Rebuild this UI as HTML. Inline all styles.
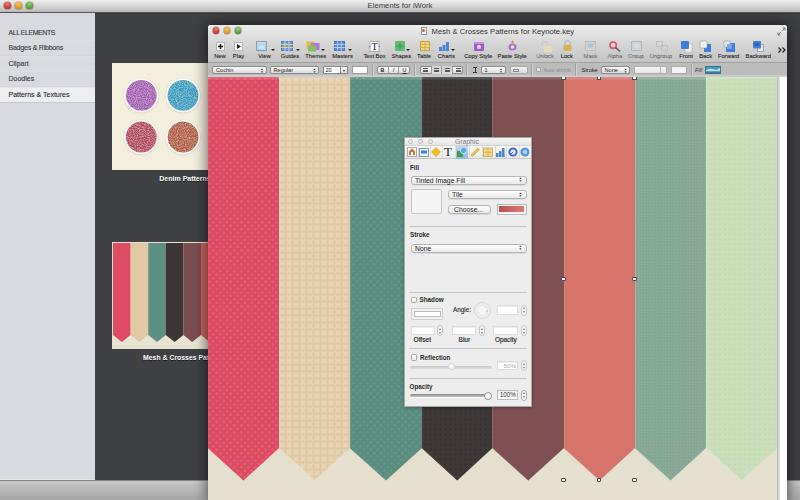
<!DOCTYPE html><html><head><meta charset="utf-8"><style>
*{margin:0;padding:0;box-sizing:border-box}
html,body{width:800px;height:500px;overflow:hidden;background:#404145;font-family:"Liberation Sans",sans-serif}
.a{position:absolute}
.tl{position:absolute;width:6.6px;height:6.6px;border-radius:50%}
.row{position:absolute;left:0;width:95px;height:16px;border-bottom:1px solid #d4d5da;border-top:1px solid #dedfe3;font-size:7px;color:#3a3a42;-webkit-text-stroke:0.12px #3a3a42;padding-left:8.5px;line-height:14px;white-space:nowrap}
.lbl{position:absolute;font-size:5.8px;color:#262626;-webkit-text-stroke:0.12px #262626;white-space:nowrap;line-height:7px;top:52.5px;width:40px;text-align:center}
.dis{color:#a0a0a0}
.arr{position:absolute;width:0;height:0;border-left:2px solid transparent;border-right:2px solid transparent;border-top:2.5px solid #1a1a1a;top:48.5px}
.pop{position:absolute;height:8px;top:66px;background:linear-gradient(#fbfbfb,#dcdcdc);border:1px solid #8a8a8a;border-radius:2px;font-size:5.6px;line-height:6px;padding-left:3px;color:#222;white-space:nowrap}
.pud{position:absolute;right:2px;top:0.5px;font-size:3px;line-height:3px;color:#222}
.fsep{position:absolute;top:64px;width:2px;height:12px;border-left:1px solid #a0a0a0;border-right:1px solid #d4d4d4}
.ip{position:absolute;height:9px;background:linear-gradient(#fefefe,#e9e9e9);border:1px solid #b4b4b4;border-radius:3px;font-size:6.8px;line-height:7px;padding-left:3.5px;color:#222;white-space:nowrap;box-shadow:0 1px 0 rgba(0,0,0,.07)}
.ud{position:absolute;right:3.5px;top:0.5px;font-size:3.2px;line-height:3.4px;color:#333}
.il{position:absolute;font-size:6.3px;font-weight:bold;color:#2a2a2a;white-space:nowrap;line-height:8px}
.fld{position:absolute;background:#fff;border:1px solid #dcdcdc;box-shadow:inset 0 1px 0 #eee}
.stp{position:absolute;width:6px;height:11px;border:1px solid #c8c8c8;border-radius:3px;background:#f6f6f6}.stp:before{content:'';position:absolute;left:1px;top:1.5px;border-left:1.5px solid transparent;border-right:1.5px solid transparent;border-bottom:2px solid #777}.stp:after{content:'';position:absolute;left:1px;bottom:1.5px;border-left:1.5px solid transparent;border-right:1.5px solid transparent;border-top:2px solid #777}
.hd{position:absolute;width:4.5px;height:4.5px;background:#fff;border:1px solid #4a4a4a;border-radius:1px}
svg{position:absolute;overflow:visible}
</style></head><body>
<div class="a" style="left:95px;top:12px;width:705px;height:468px;background:linear-gradient(#333438,#404145 3px)"></div>
<div class="a" style="left:0;top:12px;width:95px;height:468px;background:#d9dadf"></div>
<div class="row" style="top:25px;letter-spacing:-0.45px;border-top-color:transparent">ALL ELEMENTS</div>
<div class="row" style="top:40px;letter-spacing:-0.22px">Badges &amp; Ribbons</div>
<div class="row" style="top:56px;letter-spacing:0px">Clipart</div>
<div class="row" style="top:71px;letter-spacing:0px">Doodles</div>
<div class="row" style="top:86.5px;height:16.5px;line-height:14.5px;background:#eeeef0;color:#26262b;border-bottom-color:#c6c7cc;border-top-color:#e6e6ea">Patterns &amp; Textures</div>
<div class="a" style="left:0;top:478.5px;width:95px;height:1px;background:#e4e5e9"></div>
<div class="a" style="left:0;top:480px;width:800px;height:20px;background:linear-gradient(#c8c8c8,#bdbdbd 30%,#a6a6a6);border-top:1px solid #858585"></div>
<div class="a" style="left:0;top:0;width:800px;height:12.5px;background:linear-gradient(#eeeeee,#d6d6d6 50%,#bababa);border-bottom:1px solid #555"></div>
<div class="tl" style="left:4.2px;top:2.2px;background:radial-gradient(circle at 50% 30%,#f07870,#c22820 80%);box-shadow:0 0 0 0.6px rgba(60,20,20,.45)"></div>
<div class="tl" style="left:15.2px;top:2.2px;background:radial-gradient(circle at 50% 30%,#f8c860,#d08a10 80%);box-shadow:0 0 0 0.6px rgba(60,20,20,.45)"></div>
<div class="tl" style="left:26.2px;top:2.2px;background:radial-gradient(circle at 50% 30%,#98d870,#3e9020 80%);box-shadow:0 0 0 0.6px rgba(60,20,20,.45)"></div>
<div class="a" style="left:0;top:1px;width:800px;text-align:center;font-size:7.7px;line-height:10px;color:#3d3d3d">Elements for iWork</div>
<div class="a" style="left:112px;top:63px;width:96px;height:107px;background:#f4eedc"></div>
<svg style="left:112px;top:63px" width="96" height="107"><defs><filter id="dn" x="0" y="0" width="1" height="1"><feTurbulence type="fractalNoise" baseFrequency="0.9" numOctaves="2" seed="3"/><feColorMatrix type="matrix" values="0 0 0 0 1  0 0 0 0 1  0 0 0 0 1  0 0 0 0.8 -0.32"/><feComposite in2="SourceGraphic" operator="in"/><feBlend in2="SourceGraphic" mode="screen"/></filter><filter id="sh" x="-20%" y="-20%" width="140%" height="140%"><feGaussianBlur stdDeviation="0.8"/></filter></defs><circle cx="29.30000000000001" cy="32.900000000000006" r="17" fill="#000" opacity="0.15" filter="url(#sh)"/><circle cx="29.30000000000001" cy="32.400000000000006" r="17" fill="#fff"/><circle cx="29.30000000000001" cy="32.400000000000006" r="15.4" fill="#a45db2" filter="url(#dn)"/><circle cx="71" cy="32.900000000000006" r="17" fill="#000" opacity="0.15" filter="url(#sh)"/><circle cx="71" cy="32.400000000000006" r="17" fill="#fff"/><circle cx="71" cy="32.400000000000006" r="15.4" fill="#2f9fbe" filter="url(#dn)"/><circle cx="29.30000000000001" cy="74.5" r="17" fill="#000" opacity="0.15" filter="url(#sh)"/><circle cx="29.30000000000001" cy="74" r="17" fill="#fff"/><circle cx="29.30000000000001" cy="74" r="15.4" fill="#b4455d" filter="url(#dn)"/><circle cx="71" cy="74.5" r="17" fill="#000" opacity="0.15" filter="url(#sh)"/><circle cx="71" cy="74" r="17" fill="#fff"/><circle cx="71" cy="74" r="15.4" fill="#b25d3b" filter="url(#dn)"/></svg>
<div class="a" style="left:159.3px;top:174px;font-size:7px;font-weight:bold;color:#fff;white-space:nowrap;line-height:9px;text-shadow:0 1px 0 rgba(0,0,0,.6)">Denim Patterns</div>
<div class="a" style="left:112px;top:242px;width:96px;height:107px;background:#e8e4d2"></div>
<svg style="left:112px;top:242px" width="96" height="107"><polygon points="1.0,1 18.6,1 18.6,93 9.8,100 1.0,93" fill="#df4c62"/><polygon points="18.6,1 36.2,1 36.2,93 27.400000000000002,100 18.6,93" fill="#e2c9a6"/><polygon points="36.2,1 53.800000000000004,1 53.800000000000004,93 45.0,100 36.2,93" fill="#5e8f83"/><polygon points="53.800000000000004,1 71.4,1 71.4,93 62.60000000000001,100 53.800000000000004,93" fill="#3b3535"/><polygon points="71.4,1 89.0,1 89.0,93 80.2,100 71.4,93" fill="#7c4d50"/><polygon points="89.0,1 106.6,1 106.6,93 97.8,100 89.0,93" fill="#c9665f"/></svg>
<div class="a" style="left:143px;top:353px;font-size:6.9px;font-weight:bold;color:#fff;white-space:nowrap;line-height:9px;text-shadow:0 1px 0 rgba(0,0,0,.6)">Mesh &amp; Crosses Patterns</div>
<div class="a" style="left:208px;top:24.5px;width:579px;height:476px;background:#fff;box-shadow:0 0 14px 1px rgba(0,0,0,.6);border-radius:3px 3px 0 0"></div>
<div class="a" style="left:208px;top:24.5px;width:579px;height:38.5px;background:linear-gradient(#ececec,#d8d8d8 45%,#c4c4c4);border-radius:3px 3px 0 0;border-bottom:1px solid #a2a2a2"></div>
<div class="a" style="left:208px;top:63px;width:579px;height:14px;background:#bcbcbc;border-bottom:2px solid #cbcbcb"></div>
<div class="tl" style="left:212.7px;top:27.2px;background:radial-gradient(circle at 50% 30%,#f07870,#c22820 80%);box-shadow:0 0 0 0.6px rgba(60,20,20,.45)"></div>
<div class="tl" style="left:223.7px;top:27.2px;background:radial-gradient(circle at 50% 30%,#f8c860,#d08a10 80%);box-shadow:0 0 0 0.6px rgba(60,20,20,.45)"></div>
<div class="tl" style="left:234.7px;top:27.2px;background:radial-gradient(circle at 50% 30%,#98d870,#3e9020 80%);box-shadow:0 0 0 0.6px rgba(60,20,20,.45)"></div>
<div class="a" style="left:420.5px;top:27px;width:6px;height:8px;background:#fafafa;border:1px solid #999"></div>
<div class="a" style="left:422px;top:29px;width:3px;height:3px;background:#d45a2a;border-radius:50%"></div>
<div class="a" style="left:431.5px;top:26.5px;font-size:7.7px;line-height:10px;color:#333;white-space:nowrap">Mesh &amp; Crosses Patterns for Keynote.key</div>
<div class="lbl" style="left:200px">New</div>
<div class="lbl" style="left:218.5px">Play</div>
<div class="lbl" style="left:244.5px">View</div>
<div class="lbl" style="left:270px">Guides</div>
<div class="lbl" style="left:295.8px">Themes</div>
<div class="lbl" style="left:322.5px">Masters</div>
<div class="lbl" style="left:354.5px">Text Box</div>
<div class="lbl" style="left:381.3px">Shapes</div>
<div class="lbl" style="left:404px">Table</div>
<div class="lbl" style="left:426.3px">Charts</div>
<div class="lbl" style="left:458.2px">Copy Style</div>
<div class="lbl" style="left:492.20000000000005px">Paste Style</div>
<div class="lbl dis" style="left:525px">Unlock</div>
<div class="lbl" style="left:546.8px">Lock</div>
<div class="lbl dis" style="left:570.5px">Mask</div>
<div class="lbl dis" style="left:594.8px">Alpha</div>
<div class="lbl dis" style="left:615.8px">Group</div>
<div class="lbl dis" style="left:640.8px">Ungroup</div>
<div class="lbl" style="left:666px">Front</div>
<div class="lbl" style="left:685.7px">Back</div>
<div class="lbl" style="left:708.7px">Forward</div>
<div class="lbl" style="left:738.3px">Backward</div>
<div class="arr" style="left:270.5px"></div>
<div class="arr" style="left:295.5px"></div>
<div class="arr" style="left:321px"></div>
<div class="arr" style="left:348px"></div>
<div class="arr" style="left:405.5px"></div>
<div class="arr" style="left:450.5px"></div>

<svg style="left:215.5px;top:41.5px" width="9" height="9"><rect x="0.5" y="0.5" width="8" height="8" fill="#fcfcfc" stroke="#b4b4b4"/><path d="M4.5 2V7M2 4.5H7" stroke="#1e1e1e" stroke-width="1.6"/></svg>
<svg style="left:234px;top:41.5px" width="9" height="9"><rect x="0.5" y="0.5" width="8" height="8" fill="#fcfcfc" stroke="#b4b4b4"/><path d="M3 2 L7 4.5 L3 7 Z" fill="#1e1e1e"/></svg>
<svg style="left:256px;top:41px" width="11" height="10"><rect x="0.5" y="0.5" width="10" height="9" fill="#a6d6f4" stroke="#8aa0b4"/><rect x="1" y="1" width="9" height="2" fill="#d4d4d4"/><rect x="2.5" y="4.5" width="6" height="3.5" fill="#c4e6fa"/></svg>
<svg style="left:280.5px;top:41px" width="12" height="10"><rect x="0.5" y="0.5" width="11" height="9" fill="#6a9ad8" stroke="#5a7ab8"/><path d="M0 3.5H12M0 6.5H12" stroke="#e8d060" stroke-width="1"/><path d="M4 0V10M8 0V10" stroke="#c8d8f0" stroke-width="1"/></svg>
<svg style="left:305.5px;top:40.5px" width="14" height="11"><rect x="0.5" y="0.5" width="8" height="7" fill="#e8b84a"/><rect x="4.5" y="2" width="9" height="7" fill="#a878d8"/><rect x="2" y="4.5" width="8" height="6" fill="#88c060"/></svg>
<svg style="left:333.5px;top:41px" width="11" height="10"><rect x="0.5" y="0.5" width="10" height="9" fill="#5e8ed8" stroke="#4a6fb0"/><path d="M0 3.5H11M0 6.5H11M3.7 0V10M7.3 0V10" stroke="#c0d6f4" stroke-width="0.8"/></svg>
<svg style="left:369px;top:40.5px" width="11" height="11"><rect x="1" y="0.5" width="9" height="10" fill="#fcfcfc" stroke="#a8a8a8"/><text x="5.5" y="9.3" text-anchor="middle" font-family="Liberation Serif" font-size="10" fill="#222">T</text><path d="M0 5.5H1.5M9.5 5.5H11" stroke="#4a6ad0" stroke-width="0.8"/></svg>
<svg style="left:394.5px;top:41px" width="10" height="10"><rect x="0" y="0" width="10" height="10" rx="1" fill="#5cbf72"/><path d="M1 5H9M5 1V9" stroke="#2f8a48" stroke-width="0.8"/></svg>
<svg style="left:419.5px;top:41px" width="10" height="10"><rect x="0.5" y="0.5" width="9" height="9" fill="#f2d77a" stroke="#c8a440"/><path d="M0 3.5H10M0 6.5H10M5 0V10" stroke="#c8a440" stroke-width="0.7"/></svg>
<svg style="left:439px;top:41px" width="10" height="10"><path d="M0 10V6H3V10M3.5 10V4H6.5V10M7 10V1H10V10" fill="#4a86d8"/></svg>
<svg style="left:474px;top:40.5px" width="10" height="10"><rect x="0" y="1" width="10" height="9" rx="1" fill="#9c5ac8"/><rect x="0" y="1" width="10" height="2" fill="#c88ae8"/><circle cx="5" cy="6" r="2.2" fill="#e6c8f4"/></svg>
<svg style="left:508px;top:40px" width="9" height="11"><path d="M4.5 0L6 3H3Z" fill="#e88a2a"/><ellipse cx="4.5" cy="7" rx="4" ry="3.5" fill="#a870d0"/><circle cx="4.5" cy="7" r="1.8" fill="#f0d8f8"/></svg>
<svg style="left:540px;top:40.5px" width="12" height="11"><path d="M2 5V3A2.5 2.5 0 0 1 7 3" fill="none" stroke="#c8c8c8" stroke-width="1.2"/><rect x="4" y="5" width="8" height="6" rx="1" fill="#e6dcb8"/></svg>
<svg style="left:562.5px;top:40px" width="9" height="11"><path d="M2 5V3A2.5 2.5 0 0 1 7 3V5" fill="none" stroke="#b8b8b8" stroke-width="1.2"/><rect x="0.5" y="5" width="8" height="6" rx="1" fill="#d8b448"/></svg>
<svg style="left:585px;top:41px" width="11" height="10"><rect x="0.5" y="0.5" width="10" height="9" fill="#d2d2d2" stroke="#bbb"/><rect x="3" y="2.5" width="5" height="4" fill="#a8c4dc"/></svg>
<svg style="left:609px;top:41px" width="12" height="11"><circle cx="4.2" cy="4.2" r="3.2" fill="none" stroke="#e0506a" stroke-width="1.6"/><path d="M6.5 6.5L11 10.5" stroke="#555" stroke-width="1.5"/></svg>
<svg style="left:630.5px;top:41px" width="11" height="10"><rect x="0.5" y="0.5" width="10" height="9" fill="#dcdcdc" stroke="#a6b8d0"/><rect x="2" y="2" width="7" height="6" fill="none" stroke="#c8c8c8"/></svg>
<svg style="left:655.5px;top:41px" width="12" height="10"><rect x="0.5" y="0.5" width="6" height="5" fill="none" stroke="#c0c0c0"/><rect x="5.5" y="4.5" width="6" height="5" fill="none" stroke="#c0c0c0"/></svg>
<svg style="left:680.5px;top:40.5px" width="11" height="11"><rect x="4" y="3" width="7" height="8" fill="#f4f4f4" stroke="#aaa" stroke-width="0.6"/><rect x="0" y="0" width="8" height="8" rx="1" fill="#3f7ee0"/></svg>
<svg style="left:700px;top:40.5px" width="11" height="11"><rect x="4" y="3" width="7" height="8" fill="#3f7ee0"/><rect x="0" y="0" width="7" height="7" rx="1" fill="#f2f2f2" stroke="#999" stroke-width="0.6"/></svg>
<svg style="left:724px;top:40.5px" width="11" height="11"><rect x="2" y="2" width="9" height="9" fill="#3f7ee0"/><rect x="0" y="0" width="6" height="6" fill="#e8e8e8" stroke="#999" stroke-width="0.6"/><rect x="3" y="3" width="5" height="5" fill="#7aa8e8"/></svg>
<svg style="left:752.5px;top:40.5px" width="11" height="11"><rect x="4.5" y="3.5" width="6" height="7" fill="#e8e8e8" stroke="#8a8a8a" stroke-width="0.7"/><rect x="0" y="0" width="8" height="7.5" rx="0.8" fill="#3f7ee0"/><rect x="1.5" y="2" width="5" height="3" fill="#2a62c0"/></svg>
<svg style="left:777.5px;top:47px" width="8" height="6"><path d="M0.5 0.5L3 3L0.5 5.5M4.5 0.5L7 3L4.5 5.5" fill="none" stroke="#222" stroke-width="1.2"/></svg>
<svg style="left:777px;top:26.5px" width="9" height="9"><path d="M5.2 3.8L8 1M5.5 1H8V3.5M3.8 5.2L1 8M1 5.5V8H3.5" fill="none" stroke="#6a6a6a" stroke-width="0.9"/></svg>

<div class="pop" style="left:212px;width:54.5px">Cochin<span class="pud">&#9650;<br>&#9660;</span></div>
<div class="pop" style="left:269.5px;width:49.5px">Regular<span class="pud">&#9650;<br>&#9660;</span></div>
<div class="a" style="left:322.5px;top:66px;width:25.5px;height:8px;background:#fff;border:1px solid #8a8a8a;border-radius:1px;font-size:5.6px;line-height:6px;padding-left:2px;color:#222">20</div>
<div class="a" style="left:340px;top:66px;width:8px;height:8px;background:linear-gradient(#fbfbfb,#dcdcdc);border:1px solid #8a8a8a"></div>
<div class="a" style="left:342.5px;top:69.5px;width:0;height:0;border-left:1.5px solid transparent;border-right:1.5px solid transparent;border-top:2px solid #333"></div>
<div class="a" style="left:352px;top:66px;width:16px;height:7.5px;background:#fff;border:1px solid #9a9a9a"></div>
<div class="fsep" style="left:371.5px"></div>
<div class="a" style="left:377px;top:66px;width:33px;height:8px;background:linear-gradient(#fbfbfb,#dcdcdc);border:1px solid #8a8a8a;border-radius:2px"></div>
<div class="a" style="left:388px;top:66px;width:11px;height:8px;border-left:1px solid #9a9a9a;border-right:1px solid #9a9a9a"></div>
<div class="a" style="left:377px;top:66.5px;width:11px;text-align:center;font-size:5.4px;line-height:7px;font-weight:bold;color:#222">B</div>
<div class="a" style="left:388px;top:66.5px;width:11px;text-align:center;font-size:5.4px;line-height:7px;font-style:italic;color:#222">I</div>
<div class="a" style="left:399px;top:66.5px;width:11px;text-align:center;font-size:5.4px;line-height:7px;text-decoration:underline;color:#222">U</div>
<div class="fsep" style="left:413.5px"></div>
<div class="a" style="left:419.5px;top:66px;width:43.5px;height:8px;background:linear-gradient(#fbfbfb,#dcdcdc);border:1px solid #8a8a8a;border-radius:2px"></div>
<div class="a" style="left:430.5px;top:66px;width:22px;height:8px;border-left:1px solid #9a9a9a;border-right:1px solid #9a9a9a;background:linear-gradient(#cfcfcf,#dedede)"></div>
<div class="a" style="left:441px;top:66px;width:1px;height:8px;background:#9a9a9a"></div>
<div class="a" style="left:422.5px;top:68px;width:5px;height:4px;border-top:1px solid #555;border-bottom:1px solid #555"></div>
<div class="a" style="left:422.5px;top:69.5px;width:5px;height:1px;background:#555"></div>
<div class="a" style="left:433.5px;top:68px;width:5px;height:4px;border-top:1px solid #555;border-bottom:1px solid #555"></div>
<div class="a" style="left:433.5px;top:69.5px;width:5px;height:1px;background:#555"></div>
<div class="a" style="left:444.5px;top:68px;width:5px;height:4px;border-top:1px solid #555;border-bottom:1px solid #555"></div>
<div class="a" style="left:444.5px;top:69.5px;width:5px;height:1px;background:#555"></div>
<div class="a" style="left:455.5px;top:68px;width:5px;height:4px;border-top:1px solid #555;border-bottom:1px solid #555"></div>
<div class="a" style="left:455.5px;top:69.5px;width:5px;height:1px;background:#555"></div>
<div class="fsep" style="left:466px"></div>
<div class="a" style="left:473px;top:67px;width:4px;height:6px;border-top:1px solid #333;border-bottom:1px solid #333"></div>
<div class="a" style="left:474.5px;top:67px;width:1px;height:6px;background:#333"></div>
<div class="pop" style="left:480.5px;width:25px">1<span class="pud">&#9650;<br>&#9660;</span></div>
<div class="a" style="left:510px;top:66px;width:17.5px;height:8px;background:linear-gradient(#f4f4f4,#dcdcdc);border:1px solid #aaa;border-radius:2px"></div>
<div class="a" style="left:513px;top:68.5px;width:6px;height:3px;border:1px solid #888"></div>
<div class="fsep" style="left:531px"></div>
<div class="a" style="left:536px;top:67px;width:5px;height:5px;background:#e4e4e4;border:1px solid #a8a8a8"></div>
<div class="a" style="left:543.5px;top:66.5px;font-size:5.4px;line-height:7px;color:#8a8a8a;white-space:nowrap">Auto-shrink</div>
<div class="fsep" style="left:575px"></div>
<div class="a" style="left:581.5px;top:66.5px;font-size:5.6px;line-height:7px;color:#222;white-space:nowrap">Stroke</div>
<div class="pop" style="left:600.5px;width:29.5px">None<span class="pud">&#9650;<br>&#9660;</span></div>
<div class="a" style="left:633.5px;top:66px;width:33.5px;height:8px;background:linear-gradient(#f6f6f6,#e4e4e4);border:1px solid #b0b0b0;border-radius:1px"></div>
<div class="a" style="left:659.5px;top:66px;width:7.5px;height:8px;border-left:1px solid #b8b8b8"></div>
<div class="a" style="left:671px;top:66px;width:16px;height:7.5px;background:#f2f2f2;border:1px solid #aaa"></div>
<div class="fsep" style="left:690.5px"></div>
<div class="a" style="left:695px;top:66.5px;font-size:5.6px;line-height:7px;color:#333;font-style:italic;white-space:nowrap">Fill</div>
<svg style="left:705px;top:65.5px" width="16" height="8"><rect x="0.5" y="0.5" width="15" height="7" fill="#3c9cc4" stroke="#4a7088"/><path d="M1 4.5C4 2 6 2.5 9 3.5S13 3 15 2V5.5H1Z" fill="#bfe4f0"/><rect x="1" y="5.5" width="14" height="1.5" fill="#2f7fa8"/></svg>
<div class="a" style="left:208px;top:77px;width:569px;height:423px;background:#e4e0cd;overflow:hidden"><svg style="left:0;top:0" width="569" height="423"><defs><pattern id="p1" width="7" height="7" patternUnits="userSpaceOnUse"><rect width="7" height="7" fill="#db4a60"/><circle cx="1.75" cy="1.75" r="1.5" fill="#e65a70"/><circle cx="5.25" cy="5.25" r="1.5" fill="#e65a70"/></pattern><pattern id="p2" width="7" height="7" patternUnits="userSpaceOnUse"><rect width="7" height="7" fill="#e4cdab"/><rect x="2" y="2" width="4" height="4" fill="#e8d4b4"/><rect x="0" y="0" width="7" height="1" fill="#dfc8a4"/><rect x="0" y="0" width="1" height="7" fill="#dfc8a4"/></pattern><pattern id="p3" width="7" height="7" patternUnits="userSpaceOnUse"><rect width="7" height="7" fill="#5a8c7f"/><circle cx="1.75" cy="1.75" r="1.4" fill="#629588"/><circle cx="5.25" cy="5.25" r="1.4" fill="#629588"/></pattern><pattern id="p4" width="5" height="5" patternUnits="userSpaceOnUse"><rect width="5" height="5" fill="#3e3838"/><circle cx="2.5" cy="2.5" r="1" fill="#353030"/></pattern><pattern id="p7" width="3" height="3" patternUnits="userSpaceOnUse"><rect width="3" height="3" fill="#88a995"/><rect x="0" y="0" width="1" height="1" fill="#82a38f"/><rect x="1" y="1" width="1" height="1" fill="#8eae9a"/></pattern><pattern id="p8" width="5" height="5" patternUnits="userSpaceOnUse"><rect width="5" height="5" fill="#c9dfba"/><rect x="1" y="2" width="2" height="1" fill="#c2d8b2"/><rect x="3" y="4" width="1" height="1" fill="#d0e4c4"/></pattern></defs><polygon points="0,0 71,0 71,371 35.5,403.5 0,371" fill="url(#p1)"/><polyline points="0.5,0 0.5,371.5 35.5,403" fill="none" stroke="#ec5a72" stroke-width="1" opacity="0.7"/><polygon points="71,0 142,0 142,371 106.5,403.5 71,371" fill="url(#p2)"/><polyline points="71.5,0 71.5,371.5 106.5,403" fill="none" stroke="#efe0c4" stroke-width="1" opacity="0.7"/><polygon points="142,0 214,0 214,371 178.0,403.5 142,371" fill="url(#p3)"/><polyline points="142.5,0 142.5,371.5 178.0,403" fill="none" stroke="#6aa392" stroke-width="1" opacity="0.7"/><polygon points="214,0 284.5,0 284.5,371 249.25,403.5 214,371" fill="url(#p4)"/><polyline points="214.5,0 214.5,371.5 249.25,403" fill="none" stroke="#5a3f45" stroke-width="1" opacity="0.7"/><polygon points="284.5,0 356,0 356,371 320.25,403.5 284.5,371" fill="#7f5052"/><polyline points="285.0,0 285.0,371.5 320.25,403" fill="none" stroke="#8e5c5e" stroke-width="1" opacity="0.7"/><polygon points="356,0 427,0 427,371 391.5,403.5 356,371" fill="#d6736a"/><polyline points="356.5,0 356.5,371.5 391.5,403" fill="none" stroke="#e4847a" stroke-width="1" opacity="0.7"/><polygon points="427,0 498,0 498,371 462.5,403.5 427,371" fill="url(#p7)"/><polyline points="427.5,0 427.5,371.5 462.5,403" fill="none" stroke="#a2c0ac" stroke-width="1" opacity="0.7"/><polygon points="498,0 569,0 569,371 533.5,403.5 498,371" fill="url(#p8)"/><polyline points="498.5,0 498.5,371.5 533.5,403" fill="none" stroke="#dde9cf" stroke-width="1" opacity="0.7"/><rect x="0" y="0" width="569" height="2.5" fill="#fff" opacity="0.14"/></svg></div>
<div class="a" style="left:777px;top:77px;width:2.5px;height:423px;background:linear-gradient(90deg,#b8b8b8,#e8e8e8)"></div>
<div class="hd" style="left:561.25px;top:276.75px"></div>
<div class="hd" style="left:632.25px;top:276.75px"></div>
<div class="hd" style="left:561.25px;top:477.75px"></div>
<div class="hd" style="left:596.75px;top:477.75px"></div>
<div class="hd" style="left:632.25px;top:477.75px"></div>
<div class="a" style="left:561.25px;top:77px;width:4.5px;height:3px;background:#fff;border:1px solid #4a4a4a;border-top:none;border-radius:0 0 1px 1px"></div>
<div class="a" style="left:596.75px;top:77px;width:4.5px;height:3px;background:#fff;border:1px solid #4a4a4a;border-top:none;border-radius:0 0 1px 1px"></div>
<div class="a" style="left:632.25px;top:77px;width:4.5px;height:3px;background:#fff;border:1px solid #4a4a4a;border-top:none;border-radius:0 0 1px 1px"></div>

<div class="a" style="left:404px;top:137px;width:128px;height:270px;background:#ededed;border:1px solid #a8a8a8;box-shadow:0 1px 3px rgba(0,0,0,.3)"></div>
<div class="a" style="left:405px;top:138px;width:126px;height:7px;background:linear-gradient(#f4f4f4,#e6e6e6)"></div>
<div class="a" style="left:405px;top:145px;width:126px;height:14px;background:linear-gradient(#fafafa,#ebebeb);border-top:1px solid #d2d2d2;border-bottom:1px solid #c6c6c6"></div>

<div class="a" style="left:407.75px;top:139px;width:5px;height:5px;border-radius:50%;border:1px solid #bdbdbd;background:#ececec"></div>
<div class="a" style="left:418.25px;top:139px;width:5px;height:5px;border-radius:50%;border:1px solid #bdbdbd;background:#ececec"></div>
<div class="a" style="left:428.3px;top:139px;width:5px;height:5px;border-radius:50%;border:1px solid #bdbdbd;background:#ececec"></div>
<div class="a" style="left:455px;top:137.5px;font-size:6.8px;line-height:8px;color:#7c7c7c">Graphic</div>
<div class="a" style="left:455.5px;top:145.5px;width:12.5px;height:13px;background:linear-gradient(#bcd6ee,#8fb8e0)"></div>

<svg style="left:407px;top:147px" width="10" height="10"><rect x="0.5" y="0.5" width="9" height="9" fill="#fafafa" stroke="#aaa"/><path d="M2 4L5 1.5L8 4V8H2Z" fill="#c8783a"/><rect x="4" y="5" width="2" height="3" fill="#fff"/></svg>
<svg style="left:419px;top:147.5px" width="10" height="9"><rect x="0.5" y="0.5" width="9" height="8" fill="#eef4fa" stroke="#8a9ab0"/><rect x="2" y="2.5" width="6" height="3" fill="#3a86d8"/></svg>
<svg style="left:431px;top:147px" width="10" height="10"><path d="M5 0.5L9.5 5L5 9.5L0.5 5Z" fill="#f0c020" stroke="#c89a10" stroke-width="0.6"/></svg>
<div class="a" style="left:442px;top:144.5px;width:12px;text-align:center;font-family:'Liberation Serif',serif;font-size:13px;line-height:14px;color:#222">T</div>
<svg style="left:457px;top:147px" width="10" height="10"><rect x="0" y="4" width="6" height="6" fill="#3aa050"/><circle cx="6.5" cy="3.5" r="3.2" fill="#5aa8e0" stroke="#fff" stroke-width="0.6"/></svg>
<svg style="left:470px;top:147px" width="10" height="10"><path d="M1 8L8 1L9.5 2.5L2.5 9.5Z" fill="#e8c840" stroke="#b89820" stroke-width="0.6"/></svg>
<svg style="left:483px;top:147px" width="10" height="10"><rect x="0.5" y="1" width="9" height="8.5" fill="#f2d888" stroke="#c8a850" stroke-width="0.8"/><path d="M5 1V9.5M0.5 5.2H9.5" stroke="#c8a850" stroke-width="0.7"/></svg>
<svg style="left:496px;top:147px" width="9" height="10"><path d="M0 10V6H2.5V10M3 10V4H5.5V10M6 10V1H8.5V10" fill="#4a82d0"/></svg>
<svg style="left:508px;top:147px" width="10" height="10"><circle cx="5" cy="5" r="4.6" fill="#3a6ad8"/><circle cx="5" cy="5" r="2.6" fill="#e8f0fa"/><path d="M3 7L5 5" stroke="#3a6ad8" stroke-width="1"/></svg>
<svg style="left:520px;top:147px" width="11" height="10"><circle cx="5" cy="5" r="4.6" fill="#5a9ad8"/><circle cx="5" cy="5" r="2" fill="#bcd8f4"/></svg>

<div class="a" style="left:417.5px;top:146px;width:1px;height:12px;background:#dcdcdc"></div>
<div class="a" style="left:430px;top:146px;width:1px;height:12px;background:#dcdcdc"></div>
<div class="a" style="left:442px;top:146px;width:1px;height:12px;background:#dcdcdc"></div>
<div class="a" style="left:454.5px;top:146px;width:1px;height:12px;background:#dcdcdc"></div>
<div class="a" style="left:468.5px;top:146px;width:1px;height:12px;background:#dcdcdc"></div>
<div class="a" style="left:481.5px;top:146px;width:1px;height:12px;background:#dcdcdc"></div>
<div class="a" style="left:494.5px;top:146px;width:1px;height:12px;background:#dcdcdc"></div>
<div class="a" style="left:506px;top:146px;width:1px;height:12px;background:#dcdcdc"></div>
<div class="a" style="left:519px;top:146px;width:1px;height:12px;background:#dcdcdc"></div>

<div class="il" style="left:410px;top:163.5px">Fill</div>
<div class="ip" style="left:410.5px;top:175.5px;width:116px">Tinted Image Fill<span class="ud">&#9650;<br>&#9660;</span></div>
<div class="a" style="left:410.5px;top:189px;width:31px;height:24.5px;background:#f4f4f4;border:1px solid #c6c6c6;border-radius:2px"></div>
<div class="ip" style="left:447.5px;top:190px;width:79px">Tile<span class="ud">&#9650;<br>&#9660;</span></div>
<div class="ip" style="left:447.5px;top:205px;width:43px;padding-left:5.5px">Choose...</div>
<div class="a" style="left:496.5px;top:203.5px;width:30px;height:11px;background:#f5f5f5;border:1px solid #bbb"></div>
<div class="a" style="left:499px;top:206px;width:25px;height:6px;background:linear-gradient(100deg,#b7504d,#e07b76)"></div>
<div class="a" style="left:409px;top:226px;width:118px;height:1px;background:#c4c4c4"></div>
<div class="il" style="left:410px;top:231px">Stroke</div>
<div class="ip" style="left:410.5px;top:243.5px;width:116px">None<span class="ud">&#9650;<br>&#9660;</span></div>
<div class="a" style="left:409px;top:292px;width:118px;height:1px;background:#c4c4c4"></div>
<div class="a" style="left:410.5px;top:296.5px;width:6.5px;height:6.5px;background:linear-gradient(#fff,#e8e8e8);border:1px solid #a8a8a8;border-radius:1.5px"></div>
<div class="il" style="left:419.5px;top:296px">Shadow</div>
<div class="a" style="left:410.5px;top:307.5px;width:32px;height:12px;background:#f2f2f2;border:1px solid #d0d0d0"></div>
<div class="a" style="left:413.5px;top:310.5px;width:27px;height:6.5px;background:#fff;border:1px solid #b9b9b9"></div>
<div class="a" style="left:453px;top:306px;font-size:6.4px;line-height:8px;color:#333;-webkit-text-stroke:0.15px #333">Angle:</div>
<div class="a" style="left:473.5px;top:302px;width:17px;height:17px;border-radius:50%;border:1px solid #d6d6d6;background:radial-gradient(circle,#f6f6f6 40%,#e8e8e8 41%,#f0f0f0 70%)"></div><div class="a" style="left:486px;top:309.5px;width:2px;height:2px;border-radius:50%;background:#c8c8c8"></div>
<div class="fld" style="left:496.5px;top:305px;width:21.5px;height:9.5px"></div>
<div class="stp" style="left:520.5px;top:304.5px"></div>
<div class="fld" style="left:410.5px;top:325.5px;width:24.5px;height:9.5px"></div>
<div class="stp" style="left:436.5px;top:325px"></div>
<div class="fld" style="left:451.5px;top:325.5px;width:24.5px;height:9.5px"></div>
<div class="stp" style="left:478.5px;top:325px"></div>
<div class="fld" style="left:493px;top:325.5px;width:25px;height:9.5px"></div>
<div class="stp" style="left:520.5px;top:325px"></div>
<div class="a" style="left:413.5px;top:336px;font-size:6.6px;line-height:8px;color:#222;-webkit-text-stroke:0.15px #222">Offset</div>
<div class="a" style="left:458.5px;top:336px;font-size:6.6px;line-height:8px;color:#222;-webkit-text-stroke:0.15px #222">Blur</div>
<div class="a" style="left:495px;top:336px;font-size:6.4px;line-height:8px;color:#222;-webkit-text-stroke:0.15px #222">Opacity</div>
<div class="a" style="left:409px;top:347.5px;width:118px;height:1px;background:#c4c4c4"></div>
<div class="a" style="left:410.5px;top:354px;width:6.5px;height:6.5px;background:linear-gradient(#fff,#e8e8e8);border:1px solid #a8a8a8;border-radius:1.5px"></div>
<div class="il" style="left:420px;top:353.5px">Reflection</div>
<div class="a" style="left:410px;top:365.5px;width:82px;height:3px;background:linear-gradient(#c6c6c6,#e0e0e0);border-radius:1.5px"></div>
<div class="a" style="left:447.5px;top:363px;width:7px;height:7px;border-radius:50%;background:#f8f8f8;border:1px solid #d0d0d0"></div>
<div class="fld" style="left:497px;top:361px;width:21px;height:9px;font-size:6.2px;line-height:7px;color:#aaa;text-align:right;padding-right:1px">50%</div>
<div class="stp" style="left:520.5px;top:360px"></div>
<div class="a" style="left:409px;top:377.5px;width:118px;height:1px;background:#c4c4c4"></div>
<div class="il" style="left:409.5px;top:382.5px">Opacity</div>
<div class="a" style="left:410px;top:394px;width:78px;height:3px;background:linear-gradient(#8a8a8a,#c4c4c4);border-radius:1.5px;box-shadow:0 1px 0 #fff"></div>
<div class="a" style="left:483.5px;top:391.5px;width:8px;height:8px;border-radius:50%;background:#fafafa;border:1px solid #8e8e8e"></div>
<div class="fld" style="left:496.5px;top:389.5px;width:21.5px;height:10px;border-color:#bcbcbc;font-size:6.4px;line-height:8px;color:#222;text-align:right;padding-right:1px">100%</div>
<div class="stp" style="left:520.5px;top:389.5px;border-color:#aaa"></div>

</body></html>
